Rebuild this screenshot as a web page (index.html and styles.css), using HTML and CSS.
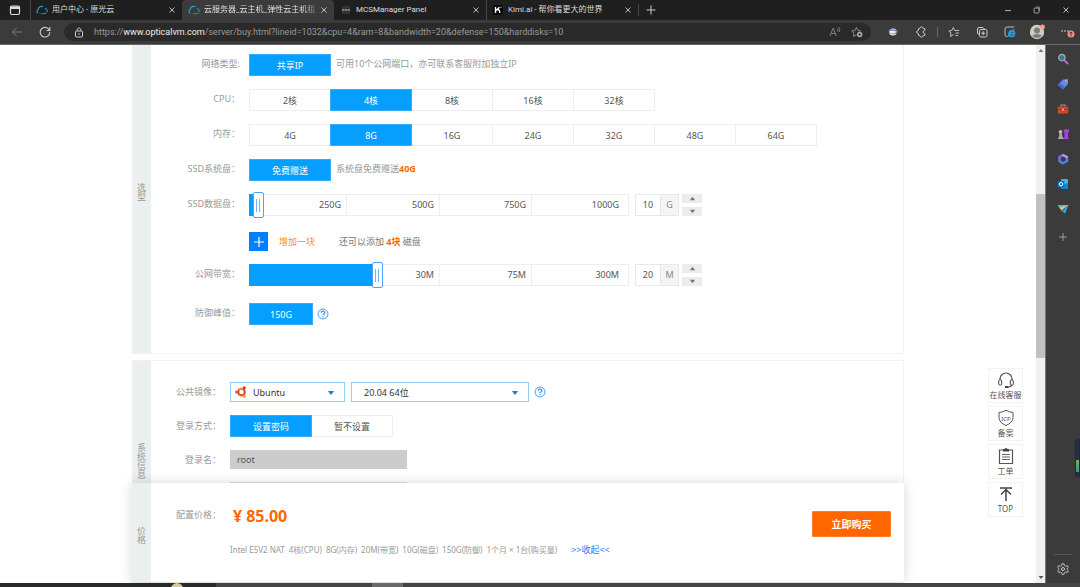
FILE: index.html
```html
<!DOCTYPE html>
<html lang="zh-CN">
<head>
<meta charset="utf-8">
<meta name="viewport" content="width=device-width, initial-scale=1">
<title>云服务器_云主机_弹性云主机租用</title>
<link rel="stylesheet" href="styles.css">
</head>
<body>
<svg class="defs" aria-hidden="true">
  <symbol id="cloud" viewBox="0 0 12 10"><path d="M2.2 8.2C.6 7.4.5 5 2.3 4.3 2.6 1.8 5.2.6 7.2 1.8" fill="none" stroke="#2b9fc0" stroke-width="1.2"/><path d="M8.8 3.4c2 .4 2.900 2.200 2.200 3.700-.5 1.100-1.400 1.500-2.500 1.500H4" fill="none" stroke="#1d86a8" stroke-width="1.300" stroke-dasharray="5 1"/></symbol>
  <symbol id="close" viewBox="0 0 8 8"><path d="M1.500 1.500l5 5m0-5l-5 5" stroke="currentColor" stroke-width=".9"/></symbol>
  <symbol id="help" viewBox="0 0 12 12"><circle cx="6" cy="6" r="5" fill="#f2f8ff" stroke="#4da3ff" stroke-width="1"/><path d="M4.300 4.700c0-2.200 3.500-2.200 3.500-.1 0 1.200-1.700 1.300-1.700 2.500M6.100 8.200v1" fill="none" stroke="#1c86ff" stroke-width="1.100"/></symbol>
  <symbol id="up" viewBox="0 0 8 6"><path d="M4 1l3.200 4H.8z" fill="#777"/></symbol>
  <symbol id="down" viewBox="0 0 8 6"><path d="M4 5L.8 1h6.400z" fill="currentColor"/></symbol>
</svg>

<header class="tabstrip">
  <button class="icon-btn workspace" aria-label="标签页操作"><svg width="12" height="12" viewBox="0 0 12 12"><rect x="1.500" y="2" width="9" height="8.500" rx="1.500" fill="none" stroke="#ddd" stroke-width="1.200"/><path d="M1.500 2.500h9v2.500h-9z" fill="#ddd"/></svg></button>
  <nav class="tabs">
    <div class="tab"><svg class="fav"><use href="#cloud"/></svg><span class="tab-title">用户中心 - 原光云</span><button class="icon-btn" aria-label="关闭"><svg class="x"><use href="#close"/></svg></button></div>
    <div class="tab active"><svg class="fav"><use href="#cloud"/></svg><span class="tab-title">云服务器_云主机_弹性云主机租用</span><button class="icon-btn" aria-label="关闭"><svg class="x"><use href="#close"/></svg></button></div>
    <div class="tab"><svg class="fav" viewBox="0 0 12 10"><rect x="2" y="1" width="8" height="8" rx="1" fill="#333"/><path d="M2 5h8" stroke="#999" stroke-width="1.500" stroke-dasharray="2.300 .5"/></svg><span class="tab-title">MCSManager Panel</span><button class="icon-btn" aria-label="关闭"><svg class="x"><use href="#close"/></svg></button></div>
    <div class="tab"><svg class="fav" viewBox="0 0 12 10"><rect x="1" width="10" height="10" rx="2" fill="#050505"/><path d="M3.500 2v6M7.500 2.200L4 5.500M5.500 4.500c2 0 2.200 1 2.200 3.500" fill="none" stroke="#fff" stroke-width="1.400"/><circle cx="9" cy="2.300" r=".9" fill="#1683ff"/></svg><span class="tab-title">Kimi.ai - 帮你看更大的世界</span><button class="icon-btn" aria-label="关闭"><svg class="x"><use href="#close"/></svg></button></div>
  </nav>
  <button class="icon-btn newtab" aria-label="新建标签页"><svg width="10" height="10"><path d="M5 .5v9M.5 5h9" stroke="#ccc"/></svg></button>
  <div class="window-buttons">
    <button class="icon-btn" aria-label="最小化"><svg width="8" height="8"><path d="M1 4.500h6" stroke="#aaa"/></svg></button>
    <button class="icon-btn" aria-label="还原"><svg width="8" height="8"><rect x="1" y="2" width="5" height="5" rx="1" fill="none" stroke="#aaa" stroke-width=".9"/><path d="M3 1h3.500v4" fill="none" stroke="#999" stroke-width=".8"/></svg></button>
    <button class="icon-btn" aria-label="关闭窗口"><svg width="8" height="8"><use href="#close"/></svg></button>
  </div>
</header>

<div class="toolbar">
  <button class="icon-btn" aria-label="后退"><svg width="12" height="12" viewBox="0 0 12 12"><path d="M11 6H1.500M5.500 2l-4 4 4 4" fill="none" stroke="#777"/></svg></button>
  <button class="icon-btn" aria-label="刷新"><svg width="12" height="12" viewBox="0 0 12 12"><path d="M10.500 4.500A4.800 4.800 0 1 0 10.800 6M10.800 1v3.500H7.500" fill="none" stroke="#ccc" stroke-width="1.100"/></svg></button>
  <div class="address">
    <svg width="10" height="11" viewBox="0 0 10 11"><rect x="1.500" y="4" width="7" height="6" rx="1" fill="none" stroke="#ccc"/><path d="M3.200 4V2.500c0-2 3.600-2 3.600 0V4" fill="none" stroke="#ccc"/><circle cx="5" cy="7" r=".8" fill="#ccc"/></svg>
    <div class="url" role="textbox" aria-label="地址" contenteditable="true" spellcheck="false">https://<span class="host">www.opticalvm.com</span>/server/buy.html?lineid=1032&amp;cpu=4&amp;ram=8&amp;bandwidth=20&amp;defense=150&amp;harddisks=10</div>
    <button class="icon-btn" aria-label="朗读"><svg width="12" height="12" viewBox="0 0 12 12"><path d="M1 10L4.200 2l3.200 8M2.200 7.500h4M8 2.500q1.500 1 .5 3M9.500 1q2.500 2 .7 5" fill="none" stroke="#888" stroke-width=".9"/></svg></button>
    <button class="icon-btn" aria-label="收藏"><svg width="12" height="12" viewBox="0 0 12 12"><path d="M5.500 9L2.500 10.500 3 7.200.8 5l3-.5L5.500 1.500 7 4.500l3 .5" fill="none" stroke="#999" stroke-width=".9"/><circle cx="8.700" cy="8.500" r="2.700" fill="#aaa"/><path d="M8.700 7v3M7.200 8.500h3" stroke="#333" stroke-width=".8"/></svg></button>
  </div>
  <div class="tools">
    <button class="icon-btn" aria-label="扩展"><svg width="12" height="12" viewBox="0 0 12 12"><ellipse cx="6" cy="6" rx="3.800" ry="3.500" fill="#eee"/><path d="M1.500 5q4-2.500 9 .5-2 3-5 2" fill="none" stroke="#5a7aa8" stroke-width="1.100"/><path d="M2 6.500q3 2 6 .8" stroke="#f0a23c" fill="none"/></svg></button>
    <button class="icon-btn" aria-label="拼图"><svg width="12" height="12" viewBox="0 0 12 12"><path d="M3.500 2.500h1.300q.2-1.700 1.700-1.700t1.700 1.700h1.600v2q-1.700.1-1.700 1.500t1.700 1.500v2H8.200q-.2 1.700-1.700 1.700T4.800 9.500H3.500V7.600Q1.500 7.500 1.500 6t2-1.600z" fill="none" stroke="#ccc" stroke-width=".9"/></svg></button>
    <span class="divider"></span>
    <button class="icon-btn" aria-label="收藏夹"><svg width="12" height="12" viewBox="0 0 12 12"><path d="M5.500 8.500L2.500 10.500 3 7 .8 5l3-.5L5.300 1.500 6.800 4.500H11M7.500 7H11M7.500 9.500H10" fill="none" stroke="#ccc" stroke-width=".9"/></svg></button>
    <button class="icon-btn" aria-label="集锦"><svg width="12" height="12" viewBox="0 0 12 12"><path d="M3 8.500L1.500 7.500V3q0-1.500 1.500-1.500h4L8.500 3" fill="none" stroke="#ccc"/><rect x="3.500" y="3.500" width="7.500" height="7.500" rx="1.500" fill="none" stroke="#ccc"/><path d="M7.200 5.200v4M5.200 7.200h4" stroke="#ccc"/></svg></button>
    <button class="icon-btn" aria-label="IE 模式"><svg width="12" height="12" viewBox="0 0 12 12"><path d="M3.500 10.500H3Q1 10.500 1 9V3q0-2 2-2h7" fill="none" stroke="#bbb"/><path d="M10.300 9q-1 1.800-3 1.500-2.600-.5-2.300-3.300.6-2.500 3-2.400 2.600.3 2.600 2.800H5.500" fill="none" stroke="#20a9ea" stroke-width="1.600"/><path d="M4.300 11Q3.500 8 11 3" fill="none" stroke="#20a9ea" stroke-width=".9"/></svg></button>
    <button class="icon-btn profile" aria-label="个人资料"><svg width="17" height="16" viewBox="0 0 17 16"><circle cx="8" cy="8" r="7.200" fill="#cfcac4"/><circle cx="8" cy="6.500" r="3" fill="#817b76"/><path d="M3.300 12q1-2 4.700-2t4.700 2Q8 16 3.300 12" fill="#817b76"/><circle cx="13.500" cy="3" r="2.400" fill="#f59b95"/></svg></button>
    <button class="icon-btn" aria-label="更多"><svg width="16" height="14" viewBox="0 0 16 14"><g fill="#ddd"><circle cx="3" cy="6" r=".8"/><circle cx="6" cy="6" r=".8"/><circle cx="9" cy="6" r=".8"/></g><circle cx="12" cy="9" r="3.500" fill="#ee918c"/><path d="M12 11.200V7M10.500 8.300L12 6.900l1.500 1.400" fill="none" stroke="#5b2524" stroke-width=".9"/></svg></button>
  </div>
</div>

<div class="workarea">
  <div class="page">
    <main class="content">
      <section class="panel">
        <h2 class="rail rail-model">选型</h2>
        <div class="form form-wide">
          <div class="row"><span class="label">网络类型:</span><div class="group"><button class="opt on">共享IP</button></div><span class="note">可用10个公网端口，亦可联系客服附加独立IP</span></div>
          <div class="row"><span class="label">CPU：</span><div class="group"><button class="opt">2核</button><button class="opt on">4核</button><button class="opt">8核</button><button class="opt">16核</button><button class="opt">32核</button></div></div>
          <div class="row"><span class="label">内存：</span><div class="group"><button class="opt">4G</button><button class="opt on">8G</button><button class="opt">16G</button><button class="opt">24G</button><button class="opt">32G</button><button class="opt">48G</button><button class="opt">64G</button></div></div>
          <div class="row"><span class="label">SSD系统盘：</span><div class="group"><button class="opt on">免费赠送</button></div><span class="note">系统盘免费赠送<strong>40G</strong></span></div>
          <div class="row spaced"><label class="label" for="disk">SSD数据盘：</label>
            <div class="slider"><div class="ticks"><span>250G</span><span>500G</span><span>750G</span><span>1000G</span></div><div class="fill" style="width:2%"></div><input id="disk" type="range" min="0" max="1000" value="10"></div>
            <div class="amount"><input type="text" value="10" aria-label="磁盘容量"><span>G</span></div>
            <div class="stepper"><button aria-label="增加容量"><svg><use href="#up"/></svg></button><button aria-label="减少容量"><svg><use href="#down"/></svg></button></div>
          </div>
          <div class="row short"><span class="label"></span><button class="add" aria-label="增加磁盘"><svg width="12" height="12"><path d="M6 1v10M1 6h10" stroke="#fff" stroke-width="1.200"/></svg></button><a class="add-link" href="#">增加一块</a><span class="remain">还可以添加 <strong>4块</strong> 磁盘</span></div>
          <div class="row spaced"><label class="label" for="band">公网带宽：</label>
            <div class="slider"><div class="ticks"><span></span><span>30M</span><span>75M</span><span>300M</span></div><div class="fill" style="width:33%"></div><input id="band" type="range" min="0" max="300" value="100"></div>
            <div class="amount"><input type="text" value="20" aria-label="带宽"><span>M</span></div>
            <div class="stepper"><button aria-label="增加带宽"><svg><use href="#up"/></svg></button><button aria-label="减少带宽"><svg><use href="#down"/></svg></button></div>
          </div>
          <div class="row tall"><span class="label">防御峰值：</span><div class="group"><button class="opt narrow on">150G</button></div><button class="icon-btn help" aria-label="帮助"><svg width="12" height="12"><use href="#help"/></svg></button></div>
        </div>
      </section>

      <section class="panel grow">
        <h2 class="rail rail-system">系统信息</h2>
        <div class="form form-system">
          <div class="row select-row"><label class="label" for="image">公共镜像：</label>
            <div class="pick"><svg class="ubuntu" viewBox="0 0 12 12"><circle cx="6.500" cy="6" r="3.300" fill="none" stroke="#d8402c" stroke-width="2"/><path d="M3.900 4A3.300 3.300 0 0 1 8 3" fill="none" stroke="#f39a3a" stroke-width="2"/><path d="M4 8.200A3.300 3.300 0 0 0 8 9" fill="none" stroke="#e6672c" stroke-width="2"/><circle cx="1.600" cy="6" r="1.500" fill="#e95420"/><circle cx="9.300" cy="1.700" r="1.500" fill="#d62f25"/><circle cx="9.300" cy="10.300" r="1.500" fill="#f4a13c"/></svg><select id="image"><option>Ubuntu</option></select><svg class="caret"><use href="#down"/></svg></div>
            <div class="pick version"><select aria-label="镜像版本"><option>20.04 64位</option></select><svg class="caret"><use href="#down"/></svg></div>
            <button class="icon-btn help" aria-label="帮助"><svg width="12" height="12"><use href="#help"/></svg></button>
          </div>
          <div class="row"><span class="label">登录方式：</span><div class="group"><button class="opt on">设置密码</button><button class="opt">暂不设置</button></div></div>
          <div class="row short"><label class="label" for="login">登录名：</label><input class="field locked" id="login" type="text" value="root" readonly></div>
          <div class="row short"><span class="label"></span><input class="field" type="password" aria-label="密码"></div>
        </div>
      </section>
    </main>

    <div class="dock">
      <section class="price-panel">
        <h2 class="rail rail-price">价格</h2>
        <div class="price-body">
          <div class="price-row"><span class="label">配置价格：</span><strong class="price"><span>¥</span><span>85.00</span></strong></div>
          <div class="summary"><span>Intel E5V2 NAT</span><span>4核(CPU)</span><span>8G(内存)</span><span>20M(带宽)</span><span>10G(磁盘)</span><span>150G(防御)</span><span>1个月 × 1台(购买量)</span><a href="#">&gt;&gt;收起&lt;&lt;</a></div>
        </div>
        <button class="buy">立即购买</button>
      </section>
    </div>

    <aside class="float-tools">
      <a href="#"><svg viewBox="0 0 18 18"><path d="M3 10V8a6 6 0 0 1 12 0v5q0 3-4 3" fill="none" stroke="#555" stroke-width="1.200"/><rect x="1.700" y="9" width="3" height="5" rx="1" fill="#fff" stroke="#444"/><rect x="13.300" y="9" width="3" height="5" rx="1" fill="#fff" stroke="#444"/><path d="M8 16h3.500" stroke="#444" stroke-width="2"/></svg>在线客服</a>
      <a href="#"><svg viewBox="0 0 18 18"><path d="M9 1.200q3 2 7 2.300v5q0 5-7 8-7-3-7-8v-5q4-.3 7-2.300z" fill="none" stroke="#555"/><text x="9" y="11.500" text-anchor="middle" class="icp">ICP</text></svg>备案</a>
      <a href="#"><svg viewBox="0 0 18 18"><path d="M6 3H2.500v13.500h13V3H12" fill="none" stroke="#555" stroke-width="1.200"/><path d="M6 2h1.500q1.500-2 3 0H12v2.500H6z" fill="#444"/><path d="M5 7.500h8M5 10h8M5 12.500h8" stroke="#666"/></svg>工单</a>
      <a href="#"><svg viewBox="0 0 18 18"><path d="M3 3h12M9 16V4M4 9.500l5-5 5 5" fill="none" stroke="#444" stroke-width="1.500"/></svg>TOP</a>
    </aside>
  </div>

  <div class="scrollbar" aria-hidden="true"><svg viewBox="0 0 8 6"><use href="#up"/></svg><div class="track"><div class="thumb"></div></div><svg viewBox="0 0 8 6"><use href="#down"/></svg></div>

  <aside class="sidebar">
    <button class="icon-btn" aria-label="搜索"><svg viewBox="0 0 12 12"><path d="M7 7l4 4" stroke="#b36bd8" stroke-width="1.800"/><circle cx="4.800" cy="4.600" r="3.200" fill="#2e7f98" stroke="#aaa" stroke-width="1.200"/></svg></button>
    <button class="icon-btn" aria-label="购物"><svg viewBox="0 0 12 12"><path d="M6 1.500l5-.5v5l-5 5.500L.8 6.800z" fill="#6787ee"/><path d="M1 7l5 4.300L8 9 3 4.800z" fill="#4d67d6"/><circle cx="9" cy="3" r="1" fill="#e8b44e"/></svg></button>
    <button class="icon-btn" aria-label="工具"><svg viewBox="0 0 12 12"><path d="M4 3.500V2h4v1.500" fill="none" stroke="#999" stroke-width="1.200"/><rect x=".8" y="3.500" width="10.400" height="7" rx="1" fill="#cf4825"/><path d="M1 6.500h10" stroke="#a03a22"/><path d="M6 5.700v1.800" stroke="#ddd" stroke-width="1.500"/></svg></button>
    <button class="icon-btn" aria-label="游戏"><svg viewBox="0 0 12 12"><path d="M6.500 1h1v1h1V1h1.500v1h1V1H12v3l-1 1v4l1 2H6.500l1-2V5z" fill="#a744e0"/><circle cx="3.500" cy="4" r="1.900" fill="#bbb"/><path d="M2.500 5.500h2.300L5.500 9 7 11H.5L2 9z" fill="#aaa"/></svg></button>
    <button class="icon-btn" aria-label="Microsoft 365"><svg viewBox="0 0 12 12"><path d="M6.500 1.800L2.500 4v4l3 2.200" fill="none" stroke="#7768df" stroke-width="2.600"/><path d="M5.500 1.800L9.800 4v2" fill="none" stroke="#b39be8" stroke-width="2.400"/><path d="M10 5v3l-4 2.200L3 8.500" fill="none" stroke="#388be0" stroke-width="2.300"/></svg></button>
    <button class="icon-btn" aria-label="Outlook"><svg viewBox="0 0 12 12"><rect x="4" y="1" width="7" height="9.500" rx="1" fill="#35b8f1"/><path d="M5 7l6-2v6H5z" fill="#1685cf"/><rect x=".8" y="3" width="6.500" height="6.500" rx="1" fill="#0872c5"/><circle cx="4" cy="6.200" r="1.700" fill="none" stroke="#fff"/></svg></button>
    <button class="icon-btn" aria-label="Drop"><svg viewBox="0 0 12 12"><path d="M.5 2.500L11.500 2 8 10.500 4.500 7.500z" fill="#35aee8"/><path d="M.5 2.500L11.500 2 3.500 5z" fill="#52c2ee"/><path d="M2.500 4.500L11.500 2 4.500 7.500z" fill="#f2c04d"/><path d="M4.500 7.500L11.500 2 5 9.500z" fill="#1f6db8"/></svg></button>
    <button class="icon-btn" aria-label="添加"><svg viewBox="0 0 12 12"><path d="M6 2v8M2 6h8" stroke="#999"/></svg></button>
    <span class="gauge"></span>
    <button class="icon-btn settings" aria-label="设置"><svg viewBox="0 0 12 12"><path d="M5 .8h2l.4 1.700 1.300.7 1.600-.6 1 1.800-1.200 1.100v1.200l1.200 1.100-1 1.800-1.600-.6-1.300.7L7 11.300H5l-.4-1.600-1.300-.7-1.600.6-1-1.800 1.200-1.100V5.500L.7 4.400l1-1.800 1.600.6 1.300-.7z" fill="none" stroke="#ccc" stroke-width=".9"/><circle cx="6" cy="6" r="1.500" fill="none" stroke="#ccc"/></svg></button>
  </aside>
</div>
<footer class="taskbar" aria-hidden="true"><span class="search"><i></i></span><span class="running"></span></footer>
</body>
</html>
```

FILE: styles.css
```css
* { box-sizing: border-box; }

body {
  margin: 0;
  height: 100vh;
  display: flex;
  flex-direction: column;
  overflow: hidden;
  background: #fff;
  color: #555;
  font: 9px/12px "Noto Sans", "Noto Sans CJK SC", sans-serif;
}

button, input, select { font: inherit; color: inherit; margin: 0; padding: 0; border-radius: 0; }
button { cursor: pointer; }
a { text-decoration: none; color: inherit; }
svg { display: block; flex: none; }
h2 { margin: 0; font: inherit; }
strong { color: #f60; }

.defs { position: absolute; width: 0; height: 0; }
.icon-btn { display: flex; align-items: center; justify-content: center; border: 0; background: none; color: #ccc; }

/* browser frame */
.tabstrip, .toolbar { font-family: Roboto, "Noto Sans CJK SC", sans-serif; }
.tabstrip { height: 20px; flex: none; display: flex; align-items: center; background: #1f1f1f; font-size: 8px; color: #ddd; }
.workspace { width: 30px; }
.tabs { display: flex; height: 100%; }
.tab { width: 152px; display: flex; align-items: center; gap: 4px; padding: 0 6px 0 5px; border-left: 1px solid #444; }
.tab.active { background: #3b3b3b; border-radius: 4px 4px 0 0; border-color: #3b3b3b; color: #eee; }
.tab.active + .tab { border-color: #1f1f1f; }
.fav { width: 12px; height: 10px; }
.x { width: 8px; height: 8px; }
.tab-title { flex: 1; min-width: 0; overflow: hidden; white-space: nowrap; }
.tab.active .tab-title { color: transparent; background: linear-gradient(90deg, #eee 88%, #666) text; }
.newtab { width: 24px; height: 12px; border-left: 1px solid #444; }
.window-buttons { margin-left: auto; display: flex; gap: 21px; padding-right: 10px; }

.toolbar { height: 25px; flex: none; display: flex; align-items: center; gap: 16px; padding-left: 11px; background: #3b3b3b; border-bottom: 1px solid #686868; }
.address { flex: 1; height: 18px; display: flex; align-items: center; gap: 10px; margin-left: -3px; padding: 0 8px 0 10px; border-radius: 9px; background: #2a2a2a; }
.url { flex: 1; overflow: hidden; white-space: nowrap; color: #999; outline: 0; }
.host { color: #eee; }
.tools { display: flex; align-items: center; gap: 16px; padding-right: 5px; }
.divider { width: 1px; height: 10px; margin: 0 -6px; background: #666; }
.profile { margin: 0 -3px; }

.workarea { flex: 1; min-height: 0; display: flex; }
.page { flex: 1; position: relative; overflow: hidden; display: flex; justify-content: center; }
.scrollbar { width: 10px; display: flex; flex-direction: column; align-items: center; padding: 3px 0; background: #f0f0f0; border-right: 1px solid #777; color: #555; }
.scrollbar svg { width: 6px; height: 5px; }
.track { flex: 1; align-self: stretch; padding-top: 141px; }
.thumb { height: 43%; background: #c1c1c1; }
.sidebar { width: 34px; position: relative; display: flex; flex-direction: column; align-items: center; gap: 13px; padding: 8px 0; background: #3b3b3b; }
.sidebar svg { width: 12px; height: 12px; }
.sidebar .icon-btn:nth-of-type(8) { margin-top: 3px; }
.settings { margin-top: auto; padding-top: 8px; width: 18px; border-top: 1px solid #555; }
.gauge { position: absolute; right: 0; top: 394px; width: 5px; height: 38px; border: 1px solid #20283a; border-radius: 3px 0 0 3px; background: linear-gradient(#263049 55%, #72b554 55%, #309c83 90%, #263049 90%); }
.taskbar { height: 4px; flex: none; display: flex; background: #434545; }
.search { width: 20%; overflow: hidden; background: #292a2a; }
.search i { display: block; width: 12px; height: 12px; margin-left: 171px; border-radius: 6px; background: #d6cf9d; }
.running { width: 31px; margin-left: 156px; background: #6a6a6a; }

/* order form */
.content { width: 100%; max-width: 772px; display: flex; flex-direction: column; gap: 6px; }
.panel { display: flex; border: solid #f2f2f2; border-width: 0 1px 1px 0; }
.panel.grow { flex: 1; border-top-width: 1px; }
.rail { width: 19px; flex: none; display: flex; justify-content: center; background: #ebeff0; color: #999; line-height: 9px; padding: 0 5px; text-align: center; word-break: break-all; }
.rail-model { align-items: center; padding-bottom: 15px; }
.rail-system { padding-top: 82px; }
.rail-price { align-items: center; padding-top: 4px; }

.form { flex: 1; display: flex; flex-direction: column; gap: 13px; }
.form-wide { padding: 9px 0 27px; }
.form-system { padding-top: 21px; }
.row { height: 22px; display: flex; align-items: center; }
.row.spaced { margin-bottom: 3px; }
.row.short { height: 19px; }
.row.tall { height: 24px; }
.row.tall .group { padding: 1px 0; }
.row.select-row { height: 20px; }
.label { width: 70px; flex: none; margin-right: 9px; padding-bottom: 2px; text-align: right; color: #999; white-space: nowrap; }
.form-system .label { padding-bottom: 0; }
.form-wide .label { width: 89px; }
.group { display: flex; align-self: stretch; }
.opt { width: 82px; margin-right: -1px; padding-top: 1px; border: 1px solid #eee; background: #fff; }
.opt.on { position: relative; border-color: #35adff; background: #069fff; color: #fff; }
.opt.narrow { width: 64px; }
.note { margin-left: 6px; padding-bottom: 2px; color: #999; }
.help { margin-left: 5px; }

.slider { position: relative; width: 380px; height: 22px; }
.ticks { height: 100%; display: grid; grid-template-columns: 97px 93px 92px 98px; border: 1px solid #eee; }
.ticks span { padding: 4px 5px 0 0; text-align: right; border-right: 1px solid #eee; }
.ticks span:first-child:empty { border: 0; }
.ticks span:last-child { padding-right: 11px; border: 0; }
.fill { position: absolute; left: 0; top: 0; height: 100%; background: #069fff; }
.slider input { position: absolute; left: 0; top: -2px; width: 100%; height: 26px; appearance: none; background: none; }
.slider input::-webkit-slider-thumb {
  appearance: none;
  width: 11px;
  height: 26px;
  border: 1px solid #4da3ff;
  border-radius: 2px;
  background: linear-gradient(90deg, #6cb2ff 1px, #fff 1px 3px, #6cb2ff 3px) center / 4px 13px no-repeat #fff;
}
.amount { height: 22px; margin-left: 6px; display: flex; border: 1px solid #e8e8e8; }
.amount input { width: 24px; border: 0; text-align: center; background: #fff; }
.amount span { width: 18px; padding-top: 4px; text-align: center; color: #888; background: #f4f4f4; border-left: 1px solid #e8e8e8; }
.stepper { align-self: stretch; display: flex; flex-direction: column; justify-content: space-between; margin-left: 3px; }
.stepper button { width: 20px; height: 9px; display: flex; justify-content: center; align-items: center; border: 0; background: #ececec; color: #777; }
.stepper svg { width: 7px; height: 5px; }

.add { width: 19px; height: 19px; display: flex; align-items: center; justify-content: center; border: 0; background: #0080ff; }
.add-link { margin-left: 11px; color: #ff8c1a; }
.remain { margin-left: 24px; color: #777; }

.pick { position: relative; width: 115px; height: 20px; margin-right: 6px; }
.pick.version { width: 178px; margin-right: 0; }
.pick select { width: 100%; height: 100%; appearance: none; padding: 2px 0 0 22px; border: 1px solid #8fd0fb; background: #fff; color: #333; }
.pick.version select { padding-left: 12px; }
.ubuntu { position: absolute; left: 5px; top: 4px; width: 12px; height: 12px; }
.caret { position: absolute; right: 10px; top: 8px; width: 8px; height: 6px; color: #0a84f5; }
.field { width: 177px; height: 19px; padding: 0 6px; border: 1px solid #ddd; background: #fff; }
.field.locked { border-color: #ccc; background: #ccc; }

/* price bar pinned over the form */
.dock { position: absolute; inset: auto 0 1px; display: flex; justify-content: center; }
.price-panel { width: 100%; max-width: 772px; min-height: 99px; display: flex; align-items: stretch; background: #fff; box-shadow: 0 0 12px rgba(0, 0, 0, .16); }
.price-body { flex: 1; padding-top: 22px; }
.price-row { display: flex; align-items: center; }
.price { display: flex; gap: 4px; margin-left: 3px; font-size: 16px; line-height: 22px; }
.summary { display: flex; gap: 4px; margin: 17px 0 0 79px; font-size: 8px; color: #999; white-space: nowrap; }
.summary a { margin-left: 10px; color: #1684fc; font-size: 9px; }
.buy { width: 79px; height: 26px; margin: 28px 13px 0 0; border: 1px solid #ff7d26; border-radius: 1px; background: #f60; color: #fff; font-size: 10px; font-weight: 700; }

.float-tools { position: absolute; right: 13px; top: 323px; display: flex; flex-direction: column; gap: 3px; }
.float-tools a { width: 35px; height: 35px; display: flex; flex-direction: column; align-items: center; justify-content: center; border: 1px solid #f2f2f2; background: #fff; font-size: 8px; white-space: nowrap; }
.float-tools svg { width: 18px; height: 18px; }
.icp { font-size: 6px; fill: #555; }
```
